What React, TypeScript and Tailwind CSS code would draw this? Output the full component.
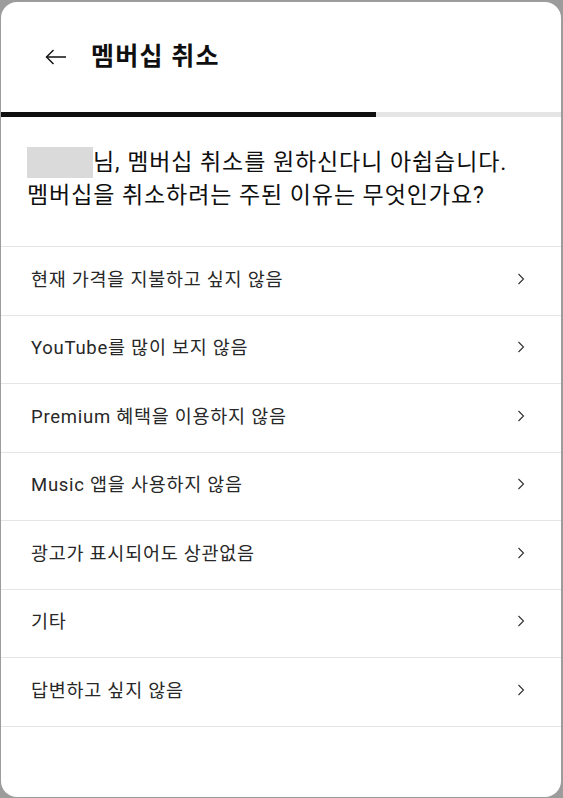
import React from "react";

const REASONS = [
  "현재 가격을 지불하고 싶지 않음",
  "YouTube를 많이 보지 않음",
  "Premium 혜택을 이용하지 않음",
  "Music 앱을 사용하지 않음",
  "광고가 표시되어도 상관없음",
  "기타",
  "답변하고 싶지 않음",
];

const font = { fontFamily: 'Roboto, "Noto Sans CJK KR", sans-serif' };

const BackArrow = () => (
  <svg width="24" height="24" viewBox="0 0 24 24" fill="none" stroke="#0f0f0f" strokeWidth="1.4">
    <path d="M22 12H2.5" />
    <path d="M9.5 5L2.5 12L9.5 19" />
  </svg>
);

const Chevron = () => (
  <svg width="8" height="12" viewBox="0 0 8 12" fill="none" stroke="#303030" strokeWidth="1.1">
    <path d="M1.5 1L6.5 6L1.5 11" />
  </svg>
);

export default function App() {
  return (
    <div className="w-[563px] h-[798px] bg-[#9c9c9c] pl-[1px] pt-[2px] overflow-hidden" style={font}>
      <div className="w-[560px] h-[795px] bg-white rounded-2xl overflow-hidden flex flex-col">
        {/* Header */}
        <div className="h-[110px] flex items-center pl-[43px]">
          <BackArrow />
          <h1 className="ml-[23px] text-[25px] font-bold text-[#0f0f0f] tracking-[0.05em]">멤버십 취소</h1>
        </div>

        {/* Progress */}
        <div className="h-[5px] bg-[#e5e5e5]">
          <div className="h-full w-[375px] bg-[#0f0f0f]" />
        </div>

        {/* Question */}
        <div className="pl-[26px] pr-4 pt-[28px] pb-[34px] text-[23px] leading-[33px] tracking-[0.04em] text-[#0f0f0f]">
          <span className="inline-block w-[66px] h-[31px] bg-[#dadada] align-[-6px] translate-y-[2px]" />
          님, 멤버십 취소를 원하신다니 아쉽습니다.
          <br />
          멤버십을 취소하려는 주된 이유는 무엇인가요?
        </div>

        {/* Reasons */}
        <ul className="border-t border-[#e5e5e5]">
          {REASONS.map((r) => (
            <li
              key={r}
              className="h-[68.5px] border-b border-[#e5e5e5] flex items-center justify-between pl-[30px] pr-[36px] text-[18.5px] tracking-[0.04em] text-[#282828]"
            >
              <span>{r}</span>
              <span className="-translate-y-[2px]">
                <Chevron />
              </span>
            </li>
          ))}
        </ul>
      </div>
    </div>
  );
}
